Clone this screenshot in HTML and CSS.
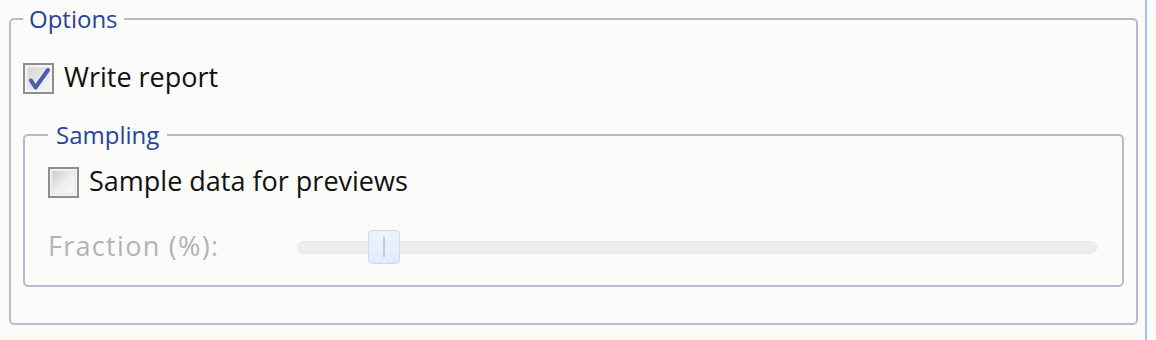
FILE: index.html
```html
<!DOCTYPE html>
<html>
<head>
<meta charset="utf-8">
<link rel="stylesheet" href="styles.css">
</head>
<body>
<div class="screen">
  <div class="pane">
    <fieldset class="group outer">
      <legend class="group-title outer-title">Options</legend>
      <label class="check-row row-report">
        <span class="cb">
          <svg width="31" height="31" viewBox="0 0 31 31">
            <defs>
              <linearGradient id="cbfill1" x1="0" y1="0" x2="1" y2="1">
                <stop offset="0" stop-color="#d4d6d8"/>
                <stop offset="1" stop-color="#f4f5f6"/>
              </linearGradient>
            </defs>
            <rect x="1" y="1" width="29" height="29" fill="#f6f6f6" stroke="#8d8e8f" stroke-width="2"/>
            <rect x="4" y="4" width="23" height="23" fill="url(#cbfill1)" stroke="#eeeeee" stroke-width="1"/>
            <path d="M8 17.5 L12.5 24.5 L25 7" fill="none" stroke="#4a5daa" stroke-width="4" stroke-linecap="round" stroke-linejoin="round"/>
          </svg>
        </span>
        <span class="check-text">Write report</span>
      </label>
      <fieldset class="group inner">
        <legend class="group-title inner-title">Sampling</legend>
        <label class="check-row row-sample">
          <span class="cb">
            <svg width="31" height="31" viewBox="0 0 31 31">
              <defs>
                <linearGradient id="cbfill2" x1="0" y1="0" x2="1" y2="1">
                  <stop offset="0" stop-color="#c9cbcd"/>
                  <stop offset="0.55" stop-color="#eef0f1"/>
                  <stop offset="1" stop-color="#fafafa"/>
                </linearGradient>
              </defs>
              <rect x="1" y="1" width="29" height="29" fill="#f4f4f4" stroke="#8d8e8f" stroke-width="2"/>
              <rect x="4" y="4" width="23" height="23" fill="url(#cbfill2)" stroke="#e2e3e4" stroke-width="1"/>
            </svg>
          </span>
          <span class="check-text">Sample data for previews</span>
        </label>
        <div class="slider-row">
          <span class="disabled-label">Fraction (%):</span>
          <div class="slider">
            <div class="track"></div>
            <div class="thumb"><span class="grip"></span></div>
          </div>
        </div>
      </fieldset>
    </fieldset>
  </div>
  <div class="edge"></div>
</div>
</body>
</html>
```
FILE: styles.css
```css
html, body {
  margin: 0;
  padding: 0;
}
body {
  background: #fbfbf9;
  font-family: "Open Sans", "Noto Sans", sans-serif;
  font-size: 27px;
  color: #111;
}
.screen {
  display: flex;
  height: 340px;
  background: #fbfbf9;
}
.pane {
  width: 1145px;
  flex: none;
}
.edge {
  width: 2px;
  flex: none;
  background: #9fc3ef;
}
.group {
  box-sizing: border-box;
  border: 2px solid #b8bacb;
  border-radius: 5px;
  min-width: 0;
}
.group-title {
  color: #27449c;
  font-size: 24px;
  line-height: 30px;
  height: 30px;
  margin-left: 0;
}
.outer {
  margin: 4px 0 0 9px;
  width: 1129px;
  height: 321px;
  padding: 26px 12px 0 12px;
}
.outer-title {
  padding: 0 6px;
  margin-top: -2px;
}
.inner {
  margin: 24px 0 0 0;
  width: 1101px;
  height: 167px;
  padding: 14px 25px 0 23px;
}
.inner-title {
  padding: 0 8px;
}
.check-row {
  display: flex;
  align-items: center;
  height: 36px;
  gap: 10px;
}
.cb {
  display: flex;
  width: 31px;
  height: 31px;
}
.check-text {
  line-height: 30px;
  position: relative;
  top: -1px;
}
.slider-row {
  display: grid;
  grid-template-columns: 249px 1fr;
  align-items: center;
  height: 36px;
  margin-top: 29px;
}
.disabled-label {
  color: #b3b3b3;
  line-height: 30px;
  letter-spacing: 1.3px;
  position: relative;
  top: -1px;
}
.slider {
  position: relative;
  height: 36px;
  display: flex;
  align-items: center;
}
.track {
  flex: 1;
  height: 13px;
  border-radius: 7px;
  background: #ededeb;
  border: 1px solid #e6e6e4;
  box-sizing: border-box;
}
.thumb {
  position: absolute;
  left: 71px;
  top: 1px;
  width: 32px;
  height: 34px;
  box-sizing: border-box;
  border: 1px solid #c9dbf4;
  border-radius: 4px;
  background: linear-gradient(#eef4fd, #e0ebfa);
  display: flex;
  justify-content: center;
  align-items: center;
}
.grip {
  width: 2px;
  height: 20px;
  background: #b8cbe7;
}
```
